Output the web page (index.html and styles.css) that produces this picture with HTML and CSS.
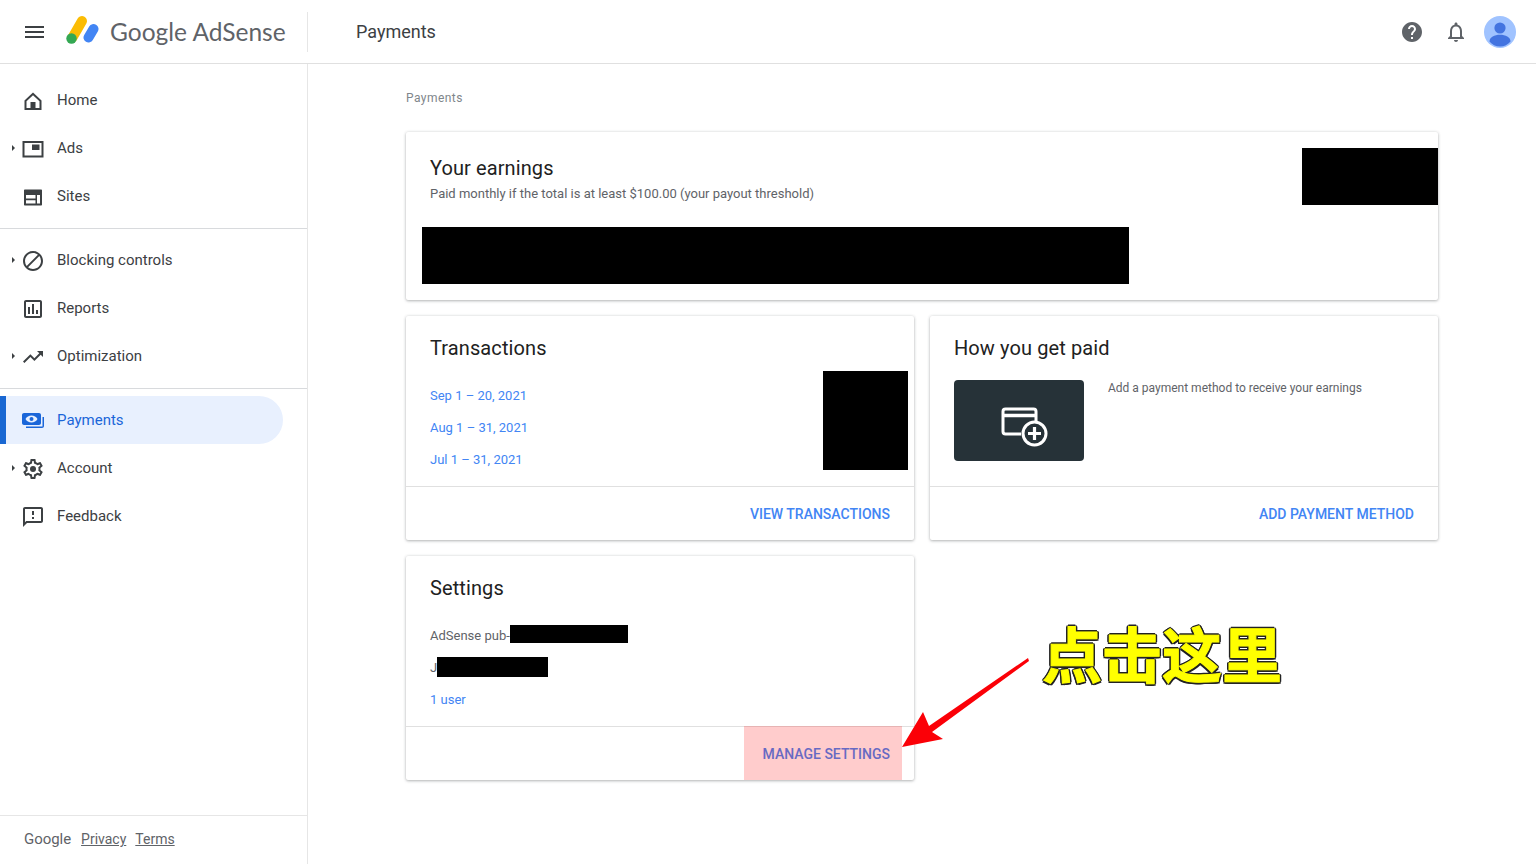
FILE: index.html
```html
<!DOCTYPE html>
<html lang="en">
<head>
<meta charset="utf-8">
<title>Payments - Google AdSense</title>
<link rel="stylesheet" href="styles.css">
</head>
<body>
<div class="app">
  <header class="topbar">
    <div class="brand">
      <button class="menu-btn" aria-label="Menu"><span></span><span></span><span></span></button>
      <svg class="logo" viewBox="0 0 34 32" width="34" height="32">
        <line x1="17" y1="7" x2="7.5" y2="23.5" stroke="#fbbc04" stroke-width="10" stroke-linecap="round"/>
        <line x1="28.5" y1="15" x2="23.5" y2="23.5" stroke="#4285f4" stroke-width="10" stroke-linecap="round"/>
        <circle cx="6.5" cy="24.5" r="5.2" fill="#34a853"/>
      </svg>
      <span class="wordmark">Google AdSense</span>
    </div>
    <h1 class="page-title">Payments</h1>
    <div class="top-actions">
      <svg class="top-icon" viewBox="0 0 24 24"><path d="M12 2C6.48 2 2 6.48 2 12s4.48 10 10 10 10-4.48 10-10S17.52 2 12 2zm1 17h-2v-2h2v2zm2.07-7.75l-.9.92C13.45 12.9 13 13.5 13 15h-2v-.5c0-1.1.45-2.1 1.17-2.83l1.24-1.26c.37-.36.59-.86.59-1.41 0-1.1-.9-2-2-2s-2 .9-2 2H8c0-2.21 1.79-4 4-4s4 1.79 4 4c0 .88-.36 1.68-.93 2.25z"/></svg>
      <svg class="top-icon" viewBox="0 0 24 24"><path d="M12 22c1.1 0 2-.9 2-2h-4c0 1.1.9 2 2 2zm6-6v-5c0-3.07-1.64-5.64-4.5-6.32V4c0-.83-.67-1.5-1.5-1.5s-1.5.67-1.5 1.5v.68C7.63 5.36 6 7.92 6 11v5l-2 2v1h16v-1l-2-2zm-2 1H8v-6c0-2.48 1.51-4.5 4-4.5s4 2.02 4 4.5v6z"/></svg>
      <svg class="avatar" viewBox="0 0 32 32" width="32" height="32">
        <circle cx="16" cy="16" r="16" fill="#a0c3ff"/>
        <circle cx="16" cy="12" r="5.6" fill="#4374e0"/>
        <path d="M5.5 25.5c0-4.6 5-6.8 10.5-6.8s10.500 2.200 10.500 6.800c-2.500 3-6.200 5-10.500 5s-8-2-10.500-5z" fill="#4374e0"/>
      </svg>
    </div>
  </header>

  <aside class="sidebar">
    <nav class="nav-group nav-first">
      <a class="nav-item"><svg class="nav-icon" viewBox="0 0 24 24"><path d="M12 3.500L3.500 11.500V21h17v-9.500zM12 6.200l6.500 6V19H5.500v-6.800z" fill-rule="evenodd"/><rect x="9.500" y="13" width="5" height="7"/></svg>Home</a>
      <a class="nav-item has-caret"><svg class="nav-icon" viewBox="0 0 24 24"><path d="M1.500 4h21v16.500h-21zM3.500 6v12.500h17V6z" fill-rule="evenodd"/><rect x="11" y="7.500" width="7.500" height="5.500"/></svg>Ads</a>
      <a class="nav-item"><svg class="nav-icon" viewBox="0 0 24 24"><path d="M4 4.500h16c.6 0 1 .4 1 1v14c0 .6-.4 1-1 1H4c-.6 0-1-.4-1-1v-14c0-.6.4-1 1-1zm1 5.500v3.500h9.500V10zm0 5.200v3.300h9.500v-3.300zM16 10v8.500h3V10z" fill-rule="evenodd"/></svg>Sites</a>
    </nav>
    <nav class="nav-group">
      <a class="nav-item has-caret"><svg class="nav-icon" viewBox="0 0 24 24"><path d="M12 2C6.480 2 2 6.480 2 12s4.480 10 10 10 10-4.480 10-10S17.520 2 12 2zM4 12c0-4.420 3.580-8 8-8 1.850 0 3.550.63 4.900 1.690L5.690 16.900A7.902 7.902 0 0 1 4 12zm8 8c-1.850 0-3.550-.63-4.900-1.690L18.310 7.100A7.902 7.902 0 0 1 20 12c0 4.420-3.580 8-8 8z"/></svg>Blocking controls</a>
      <a class="nav-item"><svg class="nav-icon" viewBox="0 0 24 24"><path d="M19 3H5c-1.100 0-2 .9-2 2v14c0 1.100.9 2 2 2h14c1.100 0 2-.9 2-2V5c0-1.100-.9-2-2-2zm0 16H5V5h14v14zM7 10h2v7H7zm4-3h2v10h-2zm4 6h2v4h-2z"/></svg>Reports</a>
      <a class="nav-item has-caret"><svg class="nav-icon" viewBox="0 0 24 24"><path d="M16 6l2.290 2.290-4.880 4.880-4-4L2 16.590 3.410 18l6-6 4 4 6.300-6.290L22 12V6z"/></svg>Optimization</a>
    </nav>
    <nav class="nav-group">
      <a class="nav-item active"><svg class="nav-icon" viewBox="0 0 24 24"><path d="M3 4h15c1.100 0 2 .9 2 2v8c0 1.100-.9 2-2 2H3c-1.100 0-2-.9-2-2V6c0-1.100.9-2 2-2zm7.500 2.500C8 6.500 5.500 8 4.500 10c1 2 3.500 3.500 6 3.500s5-1.500 6-3.500c-1-2-3.500-3.500-6-3.500zm0 1.500a2 2 0 1 1 0 4 2 2 0 0 1 0-4z" fill-rule="evenodd"/><path d="M21.500 8h1.500v9c0 1.100-.9 2-2 2H5v-1.500h16.500z"/></svg>Payments</a>
      <a class="nav-item has-caret"><svg class="nav-icon" viewBox="0 0 24 24"><path d="M19.430 12.980c.04-.32.07-.64.07-.98 0-.34-.03-.66-.07-.98l2.110-1.650c.19-.15.24-.42.12-.64l-2-3.460c-.09-.16-.26-.25-.44-.25-.06 0-.12.01-.17.03l-2.490 1c-.52-.4-1.080-.73-1.690-.98l-.38-2.650C14.460 2.180 14.250 2 14 2h-4c-.25 0-.46.18-.49.42l-.38 2.650c-.61.25-1.170.59-1.690.98l-2.490-1c-.06-.02-.12-.03-.18-.03-.17 0-.34.09-.43.25l-2 3.460c-.13.22-.07.49.12.64l2.110 1.650c-.04.32-.07.65-.07.98 0 .33.03.66.07.98l-2.110 1.650c-.19.15-.24.42-.12.64l2 3.460c.09.16.26.25.44.25.06 0 .12-.01.17-.03l2.490-1c.52.4 1.080.73 1.690.98l.38 2.650c.03.24.24.42.49.42h4c.25 0 .46-.18.49-.42l.38-2.650c.61-.25 1.170-.59 1.690-.98l2.490 1c.06.02.12.03.18.03.17 0 .34-.09.43-.25l2-3.460c.12-.22.07-.49-.12-.64l-2.110-1.650zm-1.980-1.710c.04.31.05.52.05.73 0 .21-.02.43-.05.73l-.14 1.130.89.7 1.080.84-.7 1.210-1.270-.51-1.040-.42-.9.68c-.43.32-.84.56-1.250.73l-1.060.43-.16 1.130-.2 1.350h-1.400l-.19-1.350-.16-1.130-1.060-.43c-.43-.18-.83-.41-1.230-.71l-.91-.7-1.060.43-1.270.51-.7-1.210 1.080-.84.89-.7-.14-1.130c-.03-.31-.05-.54-.05-.74s.02-.43.05-.73l.14-1.130-.89-.7-1.080-.84.7-1.210 1.270.51 1.040.42.9-.68c.43-.32.84-.56 1.250-.73l1.060-.43.16-1.130.2-1.350h1.390l.19 1.350.16 1.130 1.060.43c.43.18.83.41 1.230.71l.91.7 1.060-.43 1.270-.51.7 1.210-1.070.85-.89.7.14 1.130z"/><circle cx="12" cy="12" r="3"/></svg>Account</a>
      <a class="nav-item"><svg class="nav-icon" viewBox="0 0 24 24"><path d="M20 2H4c-1.100 0-2 .9-2 2v18l4-4h14c1.100 0 2-.9 2-2V4c0-1.100-.9-2-2-2zm0 14H5.170L4 17.170V4h16v12zM11 12h2v2h-2zm0-6h2v4h-2z"/></svg>Feedback</a>
    </nav>
    <footer class="side-footer">
      <span class="footer-brand">Google</span>
      <a class="footer-link">Privacy</a>
      <a class="footer-link">Terms</a>
    </footer>
  </aside>

  <main class="content">
    <div class="crumb">Payments</div>
    <div class="cards">
      <section class="card card-wide">
        <div class="earn-body">
          <h2 class="card-title">Your earnings</h2>
          <p class="earn-note">Paid monthly if the total is at least $100.00 (your payout threshold)</p>
          <div class="redact earn-bar"></div>
        </div>
        <div class="redact earn-corner"></div>
      </section>

      <section class="card">
        <div class="card-body">
          <h2 class="card-title">Transactions</h2>
          <ul class="rows">
            <li><a class="link">Sep 1 – 20, 2021</a></li>
            <li><a class="link">Aug 1 – 31, 2021</a></li>
            <li><a class="link">Jul 1 – 31, 2021</a></li>
          </ul>
          <div class="redact tx-block"></div>
        </div>
        <div class="card-foot"><a class="action">VIEW TRANSACTIONS</a></div>
      </section>

      <section class="card">
        <div class="card-body">
          <h2 class="card-title">How you get paid</h2>
          <div class="pay-row">
            <div class="pay-tile">
              <svg viewBox="0 0 60 60" width="60" height="60" fill="none" stroke="#fff" stroke-width="3">
                <path d="M32 43H16.500c-1.400 0-2.500-1.100-2.500-2.500v-20c0-1.400 1.100-2.500 2.500-2.500h28c1.400 0 2.500 1.100 2.500 2.500V31"/>
                <line x1="14" y1="24.500" x2="47" y2="24.500" stroke-width="3.500"/>
                <circle cx="45.500" cy="42.500" r="11.500" fill="#263238"/>
                <path d="M45.500 36v13M39 42.500h13" stroke-width="3.200"/>
              </svg>
            </div>
            <p class="pay-text">Add a payment method to receive your earnings</p>
          </div>
        </div>
        <div class="card-foot"><a class="action">ADD PAYMENT METHOD</a></div>
      </section>

      <section class="card">
        <div class="card-body">
          <h2 class="card-title">Settings</h2>
          <ul class="rows">
            <li>AdSense pub-<span class="redact inline-a"></span></li>
            <li>J<span class="redact inline-b"></span></li>
            <li><a class="link">1 user</a></li>
          </ul>
        </div>
        <div class="card-foot"><a class="action">MANAGE SETTINGS</a></div>
        <div class="highlight"></div>
      </section>
    </div>
  </main>
</div>

<svg class="arrow" viewBox="0 0 140 100" width="140" height="100">
  <path d="M128 8 L29 76 L23 62 L2 97 L43 89 L32 82 L129 11 Z" fill="#fb0007"/>
</svg>
<div class="callout">点击这里</div>
</body>
</html>
```

FILE: styles.css
```css
* { box-sizing: border-box; }
html, body { margin: 0; height: 100%; overflow: hidden; background: #fff; }
body { font-family: Roboto, "Liberation Sans", sans-serif; color: #3c4043; }
h1, h2, p, ul { margin: 0; padding: 0; }
ul { list-style: none; }

.app {
  display: grid;
  grid-template-columns: 308px 1fr;
  grid-template-rows: 64px 1fr;
  height: 864px;
}

/* top bar */
.topbar {
  grid-column: 1 / 3;
  display: flex;
  align-items: center;
  height: 64px;
  border-bottom: 1px solid #e0e0e0;
}
.brand {
  display: flex;
  align-items: center;
  width: 308px;
  height: 40px;
  padding-left: 25px;
  border-right: 1px solid #e6e6e6;
}
.menu-btn {
  display: flex;
  flex-direction: column;
  justify-content: space-between;
  width: 19px;
  height: 12px;
  padding: 0;
  border: 0;
  background: none;
}
.menu-btn span { display: block; height: 2px; background: #3c4043; }
.logo { margin: -4px 0 0 21px; }
.wordmark {
  margin-left: 11px;
  font-family: Lato, sans-serif;
  font-size: 24.500px;
  color: #5f6368;
  white-space: nowrap;
}
.page-title {
  margin-left: 48px;
  font-size: 18px;
  font-weight: 400;
  color: #3c4043;
}
.top-actions {
  display: flex;
  align-items: center;
  gap: 16px;
  margin-left: auto;
  padding-right: 20px;
}
.top-icon { width: 24px; height: 24px; fill: #5f6368; }
.top-icon + .top-icon { margin-left: 4px; }
.avatar { display: block; }

/* sidebar */
.sidebar {
  display: flex;
  flex-direction: column;
  border-right: 1px solid #e6e6e6;
}
.nav-group { padding: 7px 0 8px; border-bottom: 1px solid #d8dadd; }
.nav-group:nth-child(3) { border-bottom: 0; }
.nav-first { padding-top: 12px; }
.nav-item {
  position: relative;
  display: flex;
  align-items: center;
  gap: 12px;
  width: 283px;
  height: 48px;
  padding-left: 21px;
  font-size: 15px;
  color: #3c4043;
}
.nav-icon { width: 24px; height: 24px; margin-top: 2px; fill: #3c4043; flex: none; }
.has-caret::before {
  content: "";
  position: absolute;
  left: 12px;
  top: 21px;
  border-left: 3px solid #3c4043;
  border-top: 3px solid transparent;
  border-bottom: 3px solid transparent;
}
.nav-item.active {
  padding-left: 15px;
  border-left: 6px solid #1967d2;
  border-radius: 0 24px 24px 0;
  background: #e8f0fe;
  color: #1a66d9;
}
.active .nav-icon { fill: #1a66d9; }
.side-footer {
  display: flex;
  align-items: center;
  gap: 10px;
  height: 49px;
  margin-top: auto;
  padding: 0 0 2px 24px;
  border-top: 1px solid #e6e6e6;
  font-size: 14px;
  color: #5f6368;
}
.footer-brand { font-size: 15px; letter-spacing: -.05px; }
.footer-link { text-decoration: underline; }
.footer-link + .footer-link { margin-left: -1px; }

/* content */
.content { padding: 0 98px; }
.crumb {
  height: 68px;
  padding-top: 25px;
  font-size: 12px;
  line-height: 18px;
  letter-spacing: .45px;
  color: #80868b;
}
.cards {
  display: grid;
  grid-template-columns: 1fr 1fr;
  grid-template-rows: 168px 224px 224px;
  gap: 16px;
}
.card {
  position: relative;
  display: flex;
  flex-direction: column;
  background: #fff;
  border-radius: 2px;
  box-shadow: 0 1px 3px rgba(60, 64, 67, .35), 0 0 3px rgba(60, 64, 67, .12);
}
.card-wide { grid-column: 1 / 3; }
.card-title {
  font-size: 20px;
  font-weight: 400;
  line-height: 24px;
  letter-spacing: .1px;
  color: #212121;
}
.earn-body { padding: 24px 24px 16px; }
.earn-note {
  margin-top: 4px;
  font-size: 13px;
  line-height: 20px;
  color: #5f6368;
}
.redact { background: #000; }
.earn-bar { width: 707px; height: 57px; margin: 23px 0 0 -8px; }
.earn-corner {
  position: absolute;
  top: 16px;
  right: 0;
  width: 136px;
  height: 57px;
}
.card-body { position: relative; flex: 1; padding: 20px 24px 0; }
.rows {
  margin-top: 20px;
  font-size: 13px;
  line-height: 32px;
  color: #5f6368;
}
.link { color: #4285f4; }
.tx-block {
  position: absolute;
  top: 55px;
  right: 6px;
  width: 85px;
  height: 99px;
}
.inline-a, .inline-b { display: inline-block; }
.inline-a { width: 118px; height: 18px; vertical-align: -3px; }
.inline-b { width: 111px; height: 20px; vertical-align: -5px; }
.card-foot {
  display: flex;
  align-items: center;
  justify-content: flex-end;
  height: 54px;
  padding-right: 24px;
  border-top: 1px solid #e0e0e0;
}
.action {
  font-size: 14px;
  font-weight: 500;
  color: #4285f4;
}
.pay-row { display: flex; gap: 24px; margin-top: 20px; }
.pay-tile {
  display: flex;
  align-items: center;
  justify-content: center;
  width: 130px;
  height: 81px;
  border-radius: 4px;
  background: #263238;
}
.pay-text {
  font-size: 12px;
  line-height: 16px;
  color: #5f6368;
}
.highlight {
  position: absolute;
  top: 170px;
  right: 12px;
  width: 158px;
  height: 54px;
  background: rgba(255, 0, 0, .2);
}

/* annotations */
.arrow { position: absolute; left: 900px; top: 650px; }
.callout {
  position: absolute;
  left: 1042px;
  top: 609px;
  font-family: "Noto Sans CJK SC", sans-serif;
  font-size: 60px;
  font-weight: 700;
  line-height: 86px;
  color: #ffff00;
  -webkit-text-stroke: 1px #ffff00;
  text-shadow: 2px 0 0 #222, -2px 0 0 #222, 0 2px 0 #222, 0 -2px 0 #222,
    1.500px 1.500px 0 #222, -1.500px 1.500px 0 #222, 1.500px -1.500px 0 #222, -1.500px -1.500px 0 #222;
  white-space: nowrap;
}
```
